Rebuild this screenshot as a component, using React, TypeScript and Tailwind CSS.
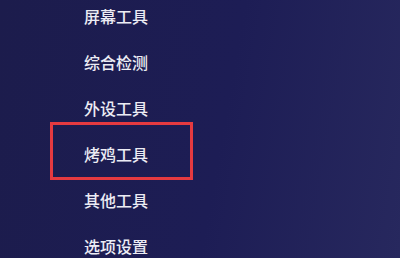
// Sidebar menu with highlighted item
const items = ['屏幕工具', '综合检测', '外设工具', '烤鸡工具', '其他工具', '选项设置'];

export default function App() {
  return (
    <div className="h-[258px] w-[400px] overflow-hidden bg-[linear-gradient(100deg,#1c1c4c_0%,#1d1d55_55%,#27285e_100%)] font-['Noto_Sans_CJK_SC',sans-serif]">
      <ul className="-mt-[7px] flex flex-col pl-[84px]">
        {items.map((label) => (
          <li key={label} className="relative flex h-[46px] items-center text-[16px] font-medium text-[#ececf4]">
            {label}
            {label === '烤鸡工具' && (
              <span className="absolute -left-[34px] top-[-9px] h-[58px] w-[143px] border-[3px] border-[#e53a40]" />
            )}
          </li>
        ))}
      </ul>
    </div>
  );
}
